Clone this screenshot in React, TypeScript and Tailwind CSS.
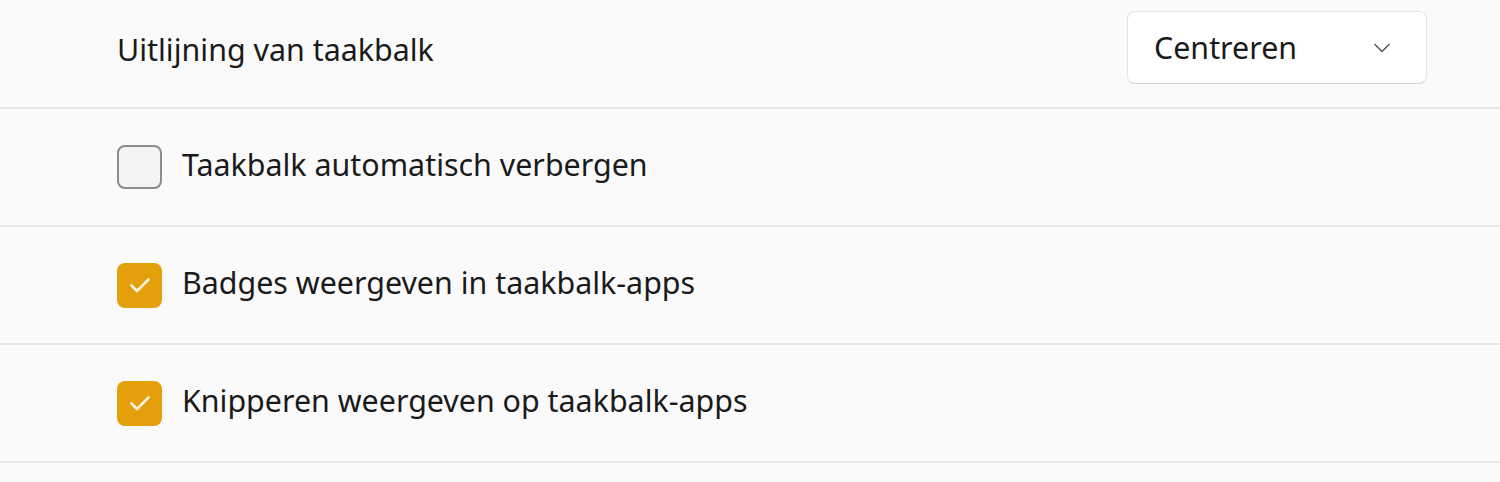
import React from "react";

function Check({ checked }: { checked: boolean }) {
  if (checked) {
    return (
      <div className="w-[45px] h-[45px] rounded-[8px] bg-[#e4a00b] flex items-center justify-center shrink-0">
        <svg className="w-[24px] h-[20px] block" viewBox="0 0 24 20" fill="none">
          <path d="M3.5 10.5 L9 16 L20.5 4.5" stroke="#fdf3dc" strokeWidth="2.6" strokeLinecap="round" strokeLinejoin="round" />
        </svg>
      </div>
    );
  }
  return <div className="w-[45px] h-[44px] rounded-[8px] bg-[#f4f4f4] border-2 border-[#8c8c8c] shrink-0" />;
}

function Row({ checked, label }: { checked: boolean; label: string }) {
  return (
    <div className="h-[118px] flex items-center pl-[117px] border-b-2 border-[#e6e6e6]">
      <Check checked={checked} />
      <span className="ml-[20px] mb-[4px] text-[30.4px] text-[#1a1a1a]">{label}</span>
    </div>
  );
}

export default function App() {
  return (
    <div
      className="w-[1500px] h-[482px] bg-[#fafafa] overflow-hidden"
      style={{ fontFamily: '"Noto Sans", "Open Sans", sans-serif' }}
    >
      <div className="h-[109px] flex items-center justify-between pl-[117px] pr-[73px] pb-[14px] border-b-2 border-[#e6e6e6]">
        <span className="text-[30.4px] text-[#1a1a1a] mt-[6px]">Uitlijning van taakbalk</span>
        <div className="w-[300px] h-[73px] mt-[2px] bg-white border border-[#e3e3e3] border-b-[#d2d2d2] rounded-[8px] flex items-center justify-between pl-[26px] pr-[36px]">
          <span className="text-[30.4px] text-[#1a1a1a]">Centreren</span>
          <svg className="w-[16px] h-[10px] block" viewBox="0 0 16 10" fill="none">
            <path d="M1 1.5 L8 8.5 L15 1.5" stroke="#5a5a5a" strokeWidth="1.6" strokeLinecap="round" strokeLinejoin="round" />
          </svg>
        </div>
      </div>
      <Row checked={false} label="Taakbalk automatisch verbergen" />
      <Row checked={true} label="Badges weergeven in taakbalk-apps" />
      <Row checked={true} label="Knipperen weergeven op taakbalk-apps" />
    </div>
  );
}
